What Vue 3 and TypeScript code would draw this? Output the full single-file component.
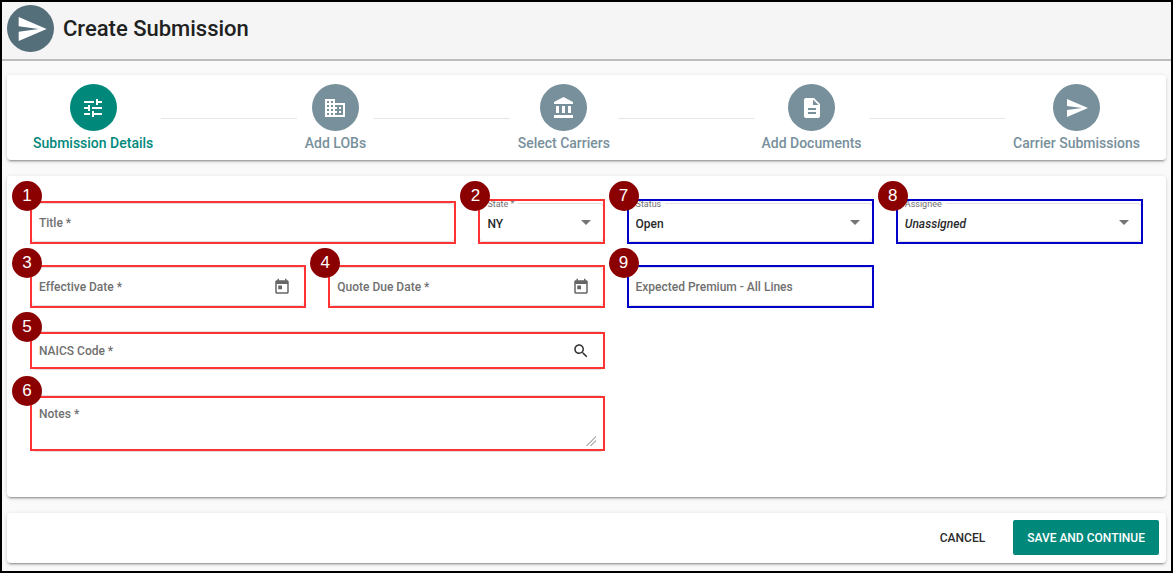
<script setup lang="ts">
import { ref } from 'vue'

interface Step {
  label: string
  path: string
}

const SEND = 'M2.01 21L23 12 2.01 3 2 10l15 2-15 2z'
const TODAY =
  'M19 3h-1V1h-2v2H8V1H6v2H5c-1.11 0-1.99.9-1.99 2L3 19c0 1.1.89 2 2 2h14c1.1 0 2-.9 2-2V5c0-1.1-.9-2-2-2zm0 16H5V8h14v11zM7 10h5v5H7z'
const SEARCH =
  'M15.5 14h-.79l-.28-.27C15.41 12.59 16 11.11 16 9.5 16 5.91 13.09 3 9.5 3S3 5.91 3 9.5 5.91 16 9.5 16c1.61 0 3.09-.59 4.23-1.57l.27.28v.79l5 4.99L20.49 19l-4.99-5zm-6 0C7.01 14 5 11.99 5 9.5S7.01 5 9.5 5 14 7.01 14 9.5 11.99 14 9.5 14z'

const steps: Step[] = [
  {
    label: 'Submission Details',
    path: 'M3 17v2h6v-2H3zM3 5v2h10V5H3zm10 16v-2h8v-2h-8v-2h-2v6h2zM7 9v2H3v2h4v2h2V9H7zm14 4v-2H11v2h10zm-6-4h2V7h4V5h-4V3h-2v6z',
  },
  {
    label: 'Add LOBs',
    path: 'M12 7V3H2v18h20V7H12zM6 19H4v-2h2v2zm0-4H4v-2h2v2zm0-4H4V9h2v2zm0-4H4V5h2v2zm4 12H8v-2h2v2zm0-4H8v-2h2v2zm0-4H8V9h2v2zm0-4H8V5h2v2zm10 12h-8v-2h2v-2h-2v-2h2v-2h-2V9h8v10zm-2-8h-2v2h2v-2zm0 4h-2v2h2v-2z',
  },
  {
    label: 'Select Carriers',
    path: 'M4 10v7h3v-7H4zm6 0v7h3v-7h-3zM2 22h19v-3H2v3zm14-12v7h3v-7h-3zm-4.500-9L2 6v2h19V6l-9.500-5z',
  },
  {
    label: 'Add Documents',
    path: 'M14 2H6c-1.100 0-1.990.9-1.990 2L4 20c0 1.100.89 2 1.990 2H18c1.100 0 2-.9 2-2V8l-6-6zm2 16H8v-2h8v2zm0-4H8v-2h8v2zm-3-5V3.500L18.500 9H13z',
  },
  { label: 'Carrier Submissions', path: SEND },
]

const active = ref(0)
const title = ref('')
const state = ref('NY')
const effective = ref('')
const quoteDue = ref('')
const naics = ref('')
const notes = ref('')
const status = ref('Open')
const assignee = ref('Unassigned')
const premium = ref('')
</script>

<template>
  <div class="page">
    <header class="header">
      <span class="avatar avatar-dark">
        <svg class="icon-lg" viewBox="0 0 24 24" aria-hidden="true"><path :d="SEND" /></svg>
      </span>
      <h1>Create Submission</h1>
    </header>

    <main class="content">
      <nav class="card stepper" aria-label="Submission steps">
        <template v-for="(step, i) in steps" :key="step.label">
          <span v-if="i > 0" class="line"></span>
          <button type="button" class="step" :class="{ active: i === active }" @click="active = i">
            <span class="avatar">
              <svg class="icon-md" viewBox="0 0 24 24" aria-hidden="true"><path :d="step.path" /></svg>
            </span>
            <span class="step-label">{{ step.label }}</span>
          </button>
        </template>
      </nav>

      <form id="submission" class="card form" @submit.prevent>
        <div class="column">
          <div class="row title-row">
            <div class="field required">
              <label for="title">Title *</label>
              <input id="title" v-model="title" type="text" />
              <span class="badge">1</span>
            </div>
            <div class="field required select-row">
              <label class="floating" for="state">State *</label>
              <select id="state" v-model="state">
                <option>NY</option>
              </select>
              <span class="arrow"></span>
              <span class="badge">2</span>
            </div>
          </div>
          <div class="row date-row">
            <div class="field required">
              <label for="effective">Effective Date *</label>
              <input id="effective" v-model="effective" type="text" />
              <button type="button" class="icon-button" aria-label="Open calendar">
                <svg class="icon-sm" viewBox="0 0 24 24"><path :d="TODAY" /></svg>
              </button>
              <span class="badge">3</span>
            </div>
            <div class="field required">
              <label for="quote">Quote Due Date *</label>
              <input id="quote" v-model="quoteDue" type="text" />
              <button type="button" class="icon-button" aria-label="Open calendar">
                <svg class="icon-sm" viewBox="0 0 24 24"><path :d="TODAY" /></svg>
              </button>
              <span class="badge">4</span>
            </div>
          </div>
          <div class="field required compact">
            <label for="naics">NAICS Code *</label>
            <input id="naics" v-model="naics" type="text" />
            <button type="button" class="icon-button dark" aria-label="Search">
              <svg class="icon-sm" viewBox="0 0 24 24"><path :d="SEARCH" /></svg>
            </button>
            <span class="badge">5</span>
          </div>
          <div class="field required compact notes">
            <label for="notes">Notes *</label>
            <textarea id="notes" v-model="notes"></textarea>
            <span class="badge">6</span>
          </div>
        </div>

        <div class="column">
          <div class="field select-row">
            <label class="floating" for="status">Status</label>
            <select id="status" v-model="status">
              <option>Open</option>
            </select>
            <span class="arrow"></span>
            <span class="badge">7</span>
          </div>
          <div class="field">
            <label for="premium">Expected Premium - All Lines</label>
            <input id="premium" v-model="premium" type="text" />
            <span class="badge">9</span>
          </div>
        </div>

        <div class="column">
          <div class="field select-row">
            <label class="floating" for="assignee">Assignee</label>
            <select id="assignee" v-model="assignee" class="italic">
              <option>Unassigned</option>
            </select>
            <span class="arrow"></span>
            <span class="badge">8</span>
          </div>
        </div>
      </form>

      <footer class="card actions">
        <button type="button" class="button">CANCEL</button>
        <button type="submit" form="submission" class="button primary">SAVE AND CONTINUE</button>
      </footer>
    </main>
  </div>
</template>

<style>
body {
  margin: 0;
}
</style>

<style scoped>
* {
  box-sizing: border-box;
}
.page {
  display: flex;
  flex-direction: column;
  min-height: 100vh;
  border: 2px solid #000;
  background: #fafafa;
  color: #2a2a2a;
  font-family: Roboto, 'Liberation Sans', sans-serif;
  font-size: 12px;
  font-weight: 500;
}
button,
input,
select,
textarea {
  margin: 0;
  padding: 0;
  border: 0;
  outline: 0;
  background: transparent;
  color: inherit;
  font: inherit;
}
button {
  cursor: pointer;
}
svg {
  display: block;
  fill: currentColor;
}
.icon-sm {
  width: 18px;
  height: 18px;
}
.icon-md {
  width: 24px;
  height: 24px;
}
.icon-lg {
  width: 32px;
  height: 32px;
}
.header {
  display: flex;
  align-items: center;
  gap: 9px;
  height: 59px;
  padding: 0 5px 4px;
  border-bottom: 2px solid #bdbdbd;
  background: #f5f5f5;
}
h1 {
  margin: 0;
  color: #212121;
  font-size: 22px;
  font-weight: 500;
  line-height: 28px;
}
.avatar {
  display: flex;
  align-items: center;
  justify-content: center;
  width: 47px;
  height: 47px;
  border-radius: 50%;
  background: #78909c;
  color: #fff;
}
.avatar-dark {
  padding-left: 3px;
  background: #546e7a;
}
.content {
  display: flex;
  flex: 1;
  flex-direction: column;
  gap: 16px;
  padding: 14px 5px 8px;
}
.card {
  border-radius: 4px;
  background: #fff;
  box-shadow:
    0 3px 1px -2px rgba(0, 0, 0, 0.2),
    0 2px 2px rgba(0, 0, 0, 0.14),
    0 1px 5px rgba(0, 0, 0, 0.12);
}
.stepper {
  display: flex;
  align-items: center;
  gap: 8px;
  padding: 9px 26px 8px;
}
.line {
  flex: 1;
  height: 1px;
  background: #e6e6e6;
}
.step {
  display: flex;
  flex-direction: column;
  align-items: center;
  gap: 4px;
  color: #78909c;
}
.step-label {
  font-size: 14px;
  line-height: 17px;
}
.step.active {
  color: #00897b;
}
.step.active .avatar {
  background: #00897b;
}
.form {
  display: grid;
  flex: 1;
  grid-template-columns: minmax(0, 572fr) minmax(0, 245fr) minmax(0, 245fr);
  gap: 24px;
  align-items: start;
  padding: 27px 24px 24px;
}
.column {
  display: flex;
  flex-direction: column;
  gap: 25px;
}
.row {
  display: grid;
  gap: 24px;
}
.title-row {
  grid-template-columns: minmax(0, 424fr) minmax(0, 124fr);
}
.date-row {
  grid-template-columns: minmax(0, 1fr) minmax(0, 1fr);
}
.field {
  position: relative;
  display: flex;
  align-items: center;
  height: 39px;
  padding: 0 13px 0 7px;
  border: 1px solid #e0e0e0;
  border-radius: 4px;
}
.field::after {
  content: '';
  position: absolute;
  inset: -3px -2px;
  border: 2px solid #0000c8;
  pointer-events: none;
}
.field.required::after {
  border-color: #ff3333;
}
.field.select-row::after {
  inset: -5px -2px -3px;
}
.field.compact::after {
  inset: 0 -2px;
}
.field label {
  color: #707070;
  line-height: 16px;
  white-space: nowrap;
}
.field input,
.field select {
  flex: 1;
  min-width: 0;
  width: 0;
  height: 100%;
}
.field select {
  appearance: none;
  padding-top: 2px;
}
.field .italic {
  font-style: italic;
}
.field .floating {
  position: absolute;
  top: -6px;
  left: 4px;
  padding: 0 4px 0 3px;
  background: #fff;
  font-size: 9px;
  font-weight: 400;
  line-height: 12px;
}
.arrow {
  border: 5px solid transparent;
  border-top-color: #757575;
  border-bottom: 0;
  pointer-events: none;
}
.select-row {
  padding-right: 12px;
}
.icon-button {
  color: #666;
}
.icon-button.dark {
  color: #333;
}
.notes {
  align-items: stretch;
  height: 57px;
  padding: 10px 7px 5px 7px;
}
.notes textarea {
  flex: 1;
  min-width: 0;
  resize: vertical;
}
.notes textarea::-webkit-resizer {
  background: linear-gradient(135deg, transparent 66%, #bbb 66% 71%, transparent 71% 79%, #bbb 79% 84%, transparent 84%);
}
.badge {
  position: absolute;
  z-index: 1;
  top: -20px;
  left: -20px;
  width: 30px;
  height: 30px;
  border-radius: 50%;
  background: #8b0000;
  color: #fff;
  font-family: 'Liberation Sans', sans-serif;
  font-size: 17px;
  font-weight: 400;
  line-height: 30px;
  text-align: center;
}
.title-row .badge,
.select-row .badge {
  top: -23px;
}
.actions {
  display: flex;
  justify-content: flex-end;
  gap: 14px;
  padding: 7px 7px 8px;
}
.button {
  height: 35px;
  padding: 0 14px;
  border-radius: 2px;
}
.primary {
  background: #00897b;
  color: #fff;
}
</style>
